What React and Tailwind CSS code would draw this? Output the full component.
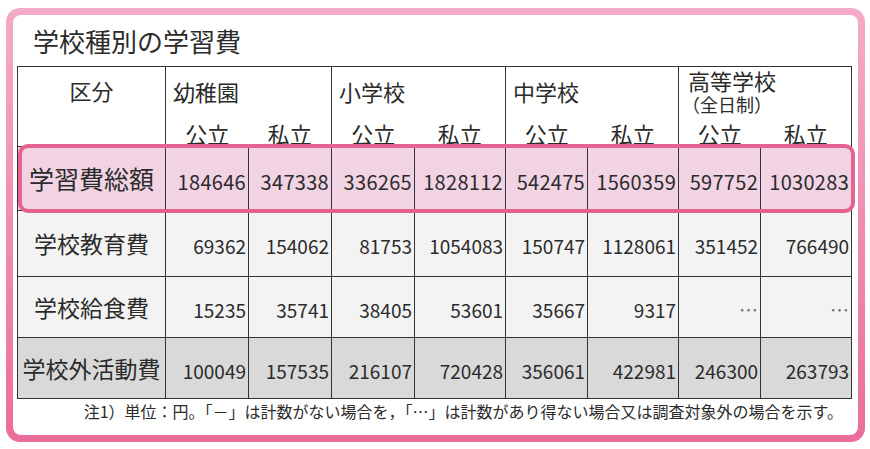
import { Fragment } from 'react'

const font = { fontFamily: '"Noto Sans CJK JP", "Noto Sans", sans-serif' }

const groups = ['幼稚園', '小学校', '中学校']

const rows = [
  {
    label: '学習費総額',
    values: ['184646', '347338', '336265', '1828112', '542475', '1560359', '597752', '1030283'],
    bg: 'bg-[#f1d3e4]',
    h: 'h-[64px]',
    big: true,
  },
  {
    label: '学校教育費',
    values: ['69362', '154062', '81753', '1054083', '150747', '1128061', '351452', '766490'],
    bg: 'bg-[#f3f3f3]',
    h: 'h-[66px]',
  },
  {
    label: '学校給食費',
    values: ['15235', '35741', '38405', '53601', '35667', '9317', '…', '…'],
    bg: 'bg-[#f3f3f3]',
    h: 'h-[61px]',
  },
  {
    label: '学校外活動費',
    values: ['100049', '157535', '216107', '720428', '356061', '422981', '246300', '263793'],
    bg: 'bg-[#d9d9d9]',
    h: 'h-[61px]',
  },
]

const colWidths = [148, 83, 83, 83, 91, 82, 91, 82, 91]

function SubHead({ text, side }) {
  return (
    <th
      className={`h-[30px] align-bottom font-normal text-[22px] leading-[26px] text-center ${
        side === 'left' ? 'border-l border-[#333]' : 'border-r border-[#333]'
      }`}
    >
      {text}
    </th>
  )
}

export default function App() {
  return (
    <div className="w-[870px] h-[449px] bg-white pt-[8px] pl-[6px] text-[#2b2b2b]" style={font}>
      <div className="w-[859px] h-[434px] rounded-[14px] p-[7px] bg-gradient-to-b from-[#f4abc8] to-[#ea6d9b]">
        <div className="h-full rounded-[8px] bg-white flex flex-col">
          <div className="h-[51px] pl-[20px] pt-[9px] text-[26px] leading-[34px]">学校種別の学習費</div>

          <div className="relative ml-[4px] w-[834px]">
            <table className="table-fixed border-collapse w-[834px]">
              <colgroup>
                {colWidths.map((w, i) => (
                  <col key={i} style={{ width: w }} />
                ))}
              </colgroup>
              <thead>
                <tr className="h-[50px]">
                  <th
                    rowSpan={2}
                    className="border border-[#333] align-top pt-[9px] font-normal text-[22px] leading-[28px] text-center"
                  >
                    区分
                  </th>
                  {groups.map(g => (
                    <th
                      key={g}
                      colSpan={2}
                      className="border-t border-x border-[#333] align-top pt-[10px] pl-[7px] font-normal text-[22px] leading-[28px] text-left"
                    >
                      {g}
                    </th>
                  ))}
                  <th
                    colSpan={2}
                    className="border-t border-x border-[#333] align-top pt-[1px] pl-[9px] font-normal text-left"
                  >
                    <div className="text-[22px] leading-[25px]">高等学校</div>
                    <div className="text-[18px] leading-[22px] -ml-[6px]">（全日制）</div>
                  </th>
                </tr>
                <tr>
                  {[0, 1, 2, 3].map(i => (
                    <Fragment key={i}>
                      <SubHead text="公立" side="left" />
                      <SubHead text="私立" side="right" />
                    </Fragment>
                  ))}
                </tr>
              </thead>
              <tbody>
                {rows.map(r => (
                  <tr key={r.label} className={`${r.h} ${r.bg}`}>
                    <td
                      className={`border border-[#333] text-center whitespace-nowrap ${
                        r.big ? 'text-[25px]' : 'text-[23px]'
                      }`}
                    >
                      {r.label}
                    </td>
                    {r.values.map((v, i) => (
                      <td
                        key={i}
                        className={`border border-[#333] text-right pr-[2px] pt-[6px] whitespace-nowrap ${
                          r.big ? 'text-[20px] tracking-[0.3px]' : 'text-[19px]'
                        } ${v === '…' ? 'text-[#777] text-[15px]' : ''}`}
                      >
                        {v}
                      </td>
                    ))}
                  </tr>
                ))}
              </tbody>
            </table>
            <div className="absolute left-[1px] top-[78px] w-[837px] h-[69px] rounded-[10px] border-[4px] border-[#e5638f] pointer-events-none" />
          </div>

          <div className="pt-[2px] pr-[15px] text-right text-[16px] leading-[20px]">
            注1）単位：円。「－」は計数がない場合を，「…」は計数があり得ない場合又は調査対象外の場合を示す。
          </div>
        </div>
      </div>
    </div>
  )
}
